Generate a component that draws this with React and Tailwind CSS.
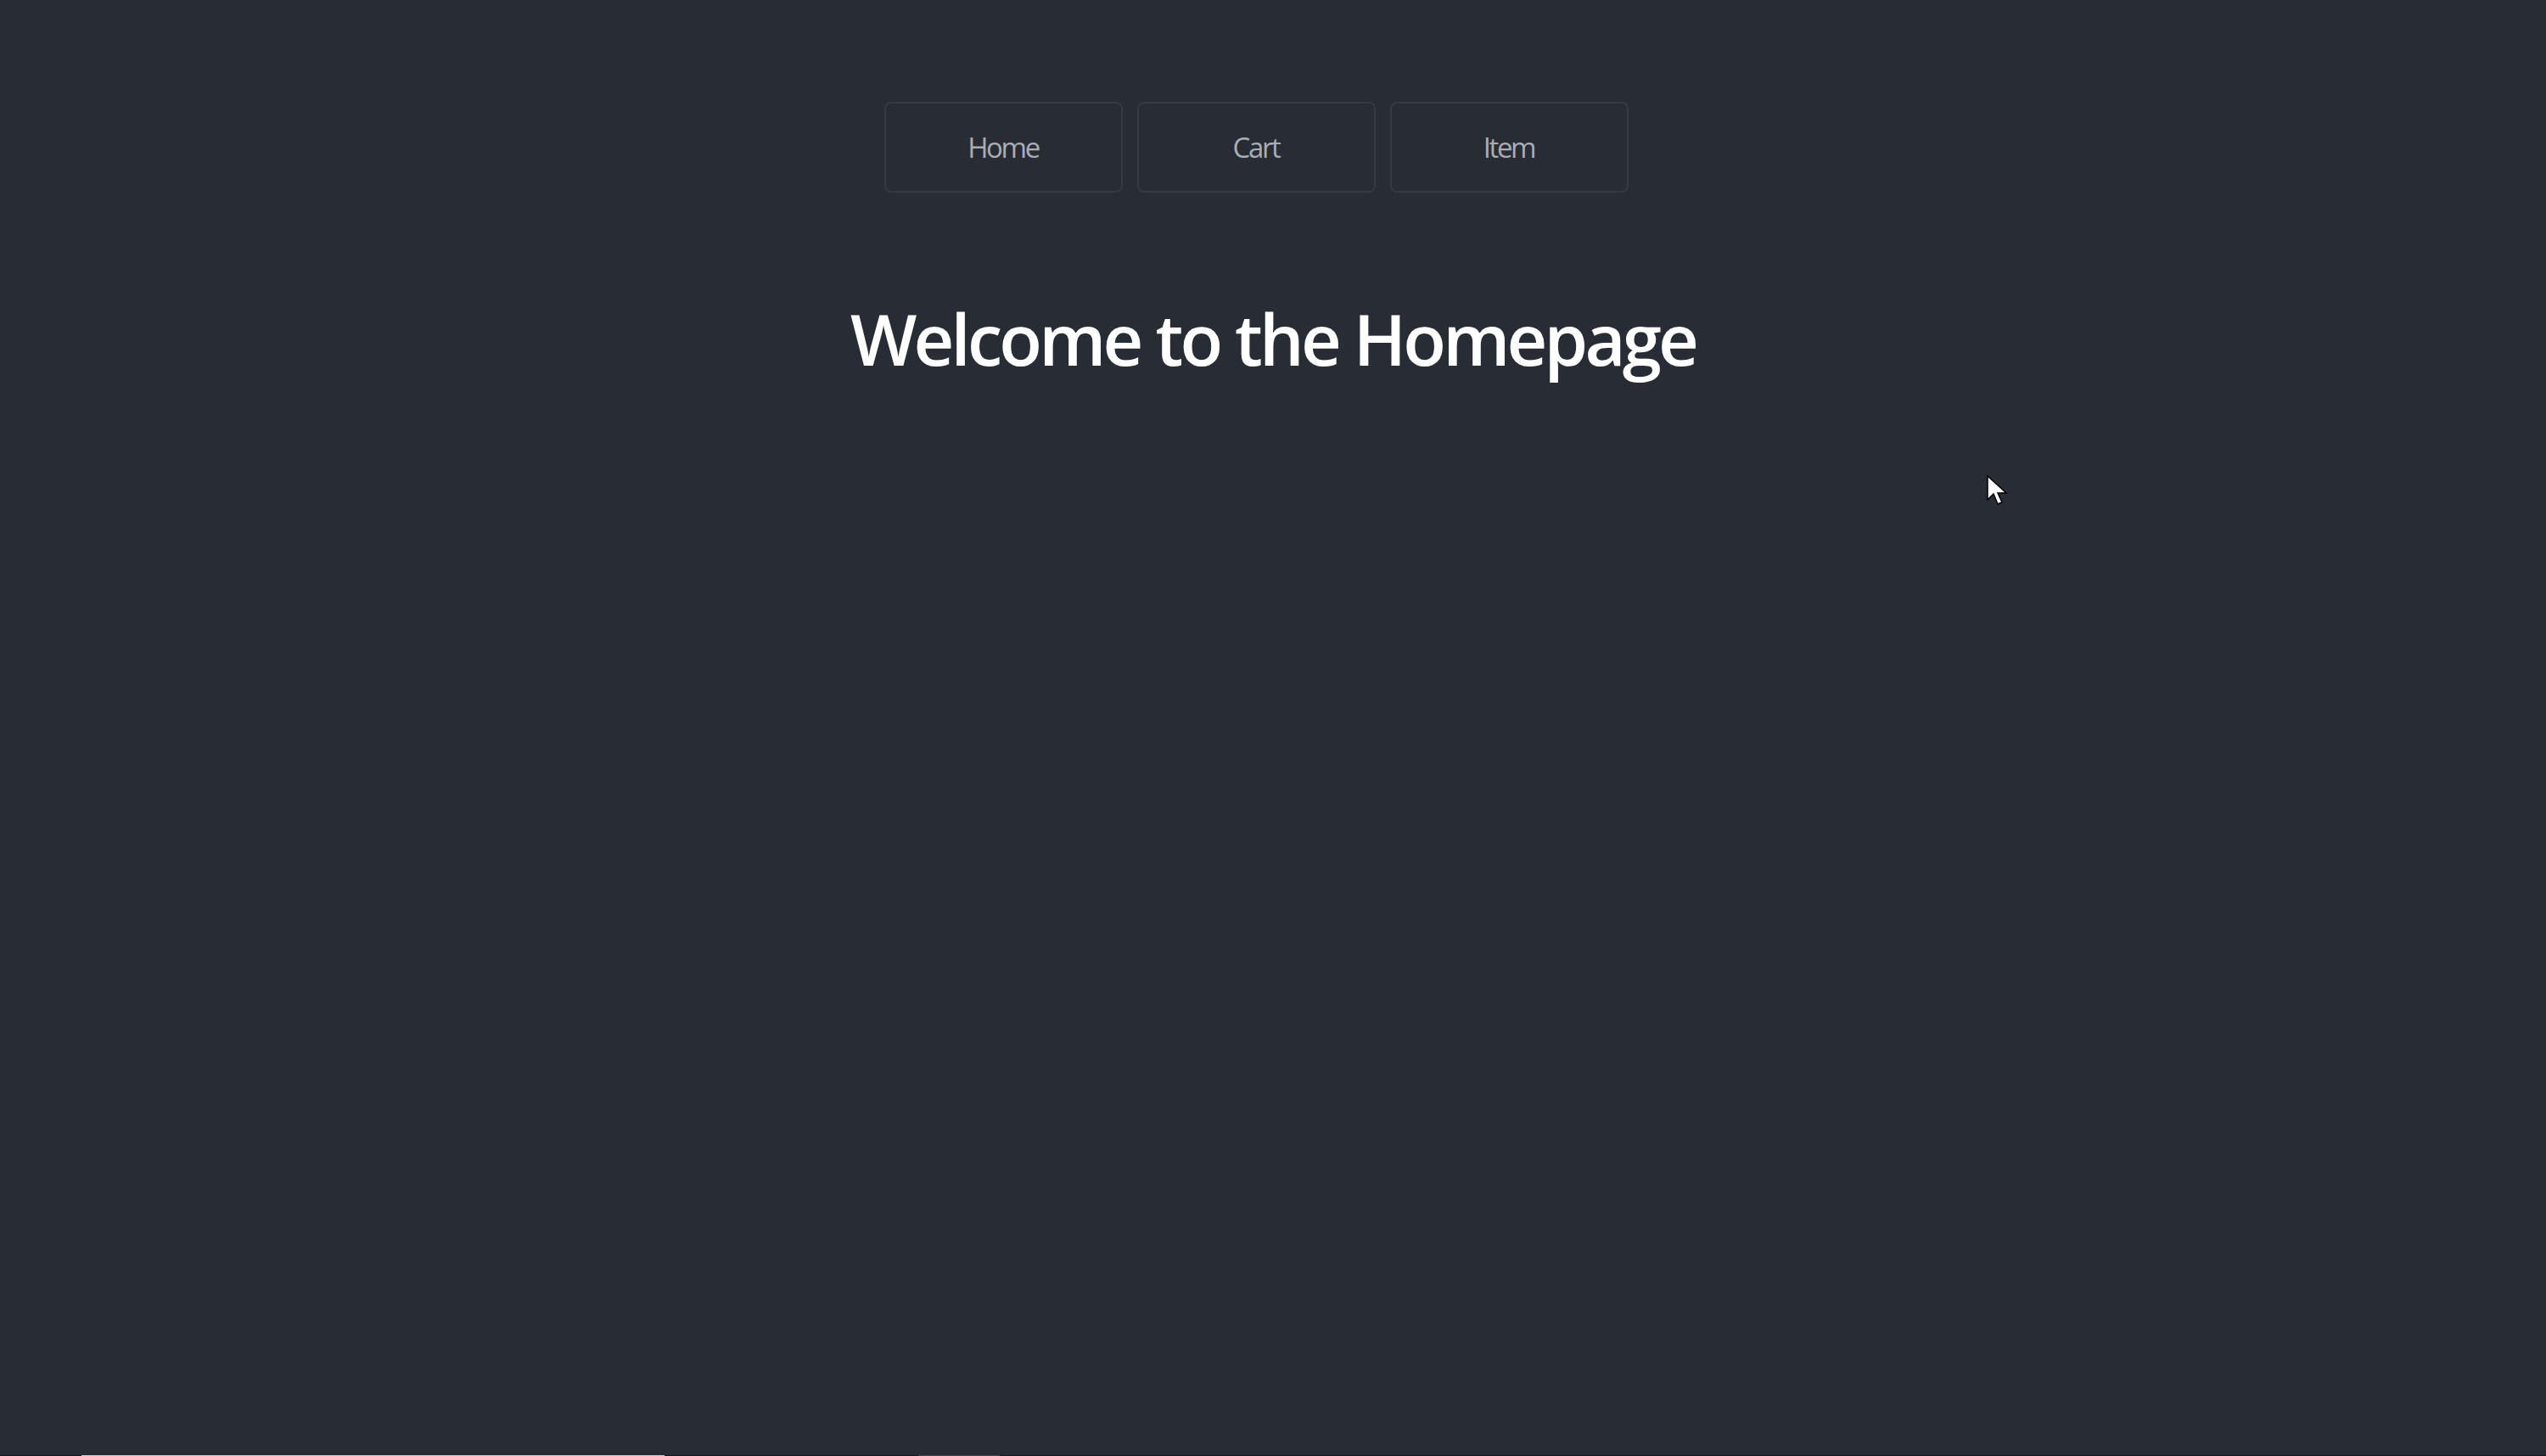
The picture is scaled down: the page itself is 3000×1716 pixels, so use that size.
import React from "react";

export default function App() {
  const items = ["Home", "Cart", "Item"];
  return (
    <div className="relative w-full h-[1716px] bg-[#282c34] overflow-hidden flex flex-col items-center" style={{ fontFamily: '"Open Sans", "Noto Sans", sans-serif' }}>
      <nav className="mt-[120px] mr-[40px] flex gap-[17px]">
        {items.map((t) => (
          <button
            key={t}
            className="w-[281px] h-[107px] rounded-[8px] border-2 border-[#363a43] bg-[#282c34] flex items-center justify-center text-[33px] leading-none text-[#a9adb4] tracking-[-2.4px]"
          >
            {t}
          </button>
        ))}
      </nav>
      <h1 className="mt-[130px] text-[83px] leading-none font-semibold text-white tracking-[-3.8px]">
        Welcome to the Homepage
      </h1>

      <svg className="absolute left-[2341px] top-[560px]" width="26" height="40" viewBox="0 0 26 40">
        <path d="M1 1 L1 29 L8 22 L13 34 L18 32 L13 21 L23 21 Z" fill="#ffffff" stroke="#000000" strokeWidth="1.5" strokeLinejoin="miter" />
      </svg>

      <div className="absolute left-0 bottom-0 w-full h-[1px] bg-[#16181c]">
        <div className="absolute left-[96px] top-0 w-[687px] h-[1px] bg-[#d0d0d0]" />
        <div className="absolute left-[1082px] top-0 w-[96px] h-[1px] bg-[#44474d]" />
      </div>
    </div>
  );
}
